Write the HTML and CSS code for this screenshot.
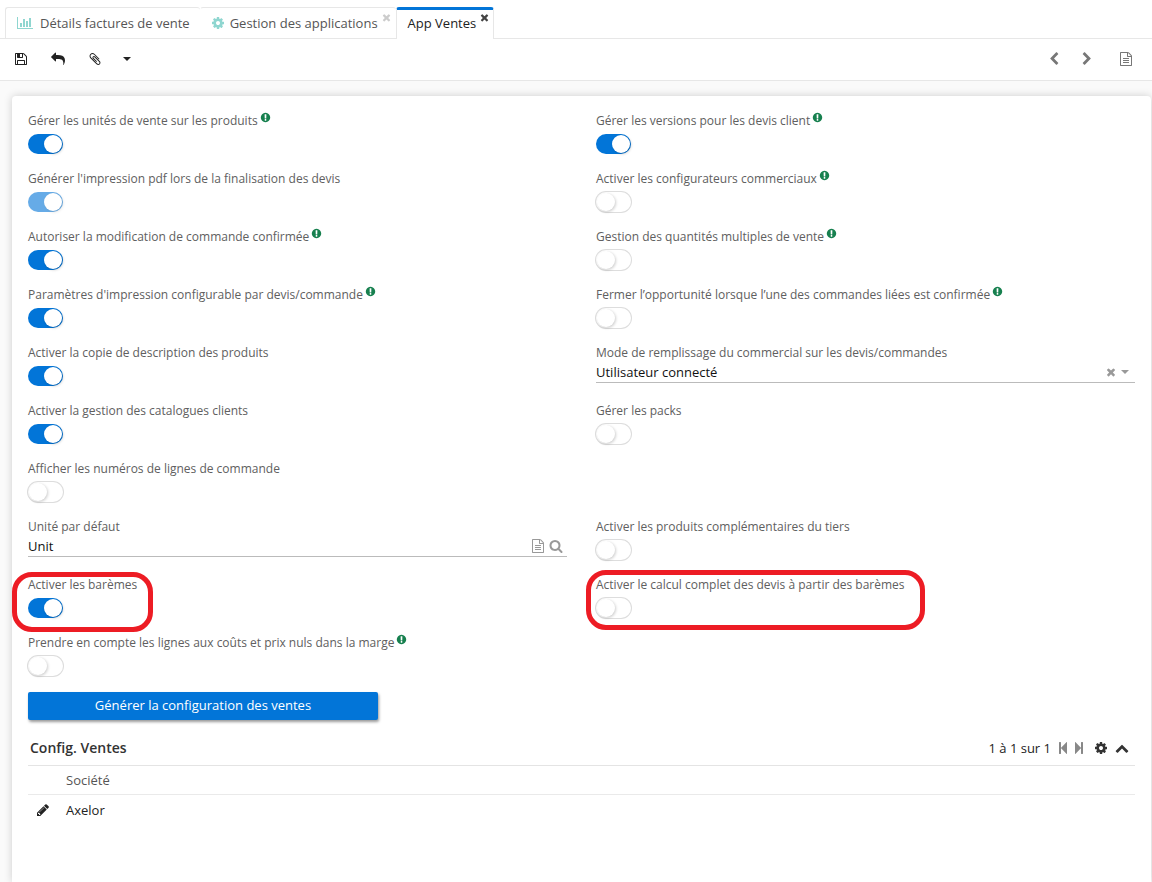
FILE: index.html
```html
<!DOCTYPE html>
<html lang="fr">
<head>
<meta charset="utf-8">
<title>App Ventes</title>
<link rel="stylesheet" href="styles.css">
</head>
<body>
<svg class="sprite" aria-hidden="true">
  <symbol id="times" viewBox="0 0 1792 1792"><path d="M1490 1322q0 40-28 68l-136 136q-28 28-68 28t-68-28l-294-294-294 294q-28 28-68 28t-68-28l-136-136q-28-28-28-68t28-68l294-294-294-294q-28-28-28-68t28-68l136-136q28-28 68-28t68 28l294 294 294-294q28-28 68-28t68 28l136 136q28 28 28 68t-28 68l-294 294 294 294q28 28 28 68z"/></symbol>
  <symbol id="cog" viewBox="0 0 1792 1792"><path d="M1152 896q0-106-75-181t-181-75-181 75-75 181 75 181 181 75 181-75 75-181zm512-109v222q0 12-8 23t-20 13l-185 28q-19 54-39 91 35 50 107 138 10 12 10 25t-9 23q-27 37-99 108t-94 71q-12 0-26-9l-138-108q-44 23-91 38-16 136-29 186-7 28-36 28h-222q-14 0-24.500-8.500t-11.500-21.500l-28-184q-49-16-90-37l-141 107q-10 9-25 9-14 0-25-11-126-114-165-168-7-10-7-23 0-12 8-23 15-21 51-66.500t54-70.500q-27-50-41-99l-183-27q-13-2-21-12.500t-8-23.500v-222q0-12 8-23t19-13l186-28q14-46 39-92-40-57-107-138-10-12-10-24 0-10 9-23 26-36 98.500-107.500t94.500-71.500q13 0 26 10l138 107q44-23 91-38 16-136 29-186 7-28 36-28h222q14 0 24.500 8.500t11.500 21.500l28 184q49 16 90 37l142-107q9-9 24-9 13 0 25 10 129 119 165 170 7 8 7 22 0 12-8 23-15 21-51 66.500t-54 70.500q26 50 41 98l183 28q13 2 21 12.500t8 23.500z"/></symbol>
  <symbol id="save" viewBox="0 0 1792 1792"><path d="M512 1536h768v-384h-768v384zm896 0h128v-896q0-14-10-38.500t-20-34.500l-281-281q-10-10-34-20t-39-10v416q0 40-28 68t-68 28h-576q-40 0-68-28t-28-68v-416h-128v1280h128v-416q0-40 28-68t68-28h832q40 0 68 28t28 68v416zm-384-928v-320q0-13-9.500-22.500t-22.500-9.500h-192q-13 0-22.500 9.500t-9.500 22.500v320q0 13 9.500 22.500t22.500 9.500h192q13 0 22.500-9.500t9.500-22.500zm640 32v928q0 40-28 68t-68 28h-1344q-40 0-68-28t-28-68v-1344q0-40 28-68t68-28h928q40 0 88 20t76 48l280 280q28 28 48 76t20 88z"/></symbol>
  <symbol id="reply" viewBox="0 0 1792 1792"><path d="M1792 1120q0 166-127 451-3 7-10.500 24t-13.500 30-13 22q-12 17-28 17-15 0-23.500-10t-8.500-25q0-9 2.500-26.500t2.500-23.500q5-68 5-123 0-101-17.500-181t-48.500-138.500-80-101-105.500-69.500-133-42.500-154-21.500-175.500-6h-224v256q0 26-19 45t-45 19-45-19l-512-512q-19-19-19-45t19-45l512-512q19-19 45-19t45 19 19 45v256h224q713 0 875 403 53 134 53 333z"/></symbol>
  <symbol id="clip" viewBox="0 0 1792 1792"><path d="M1596 1385q0 117-79 196t-196 79q-135 0-235-100l-777-776q-113-115-113-271 0-159 110-270t269-111q158 0 273 113l605 606q10 10 10 22 0 16-30.500 46.500t-46.500 30.500q-13 0-23-10l-606-607q-79-77-181-77-106 0-179 75t-73 181q0 105 76 181l776 777q63 63 145 63 64 0 106-42t42-106q0-82-63-145l-581-581q-26-24-60-24-29 0-48 19t-19 48q0 32 25 59l410 410q10 10 10 22 0 16-31 47t-47 31q-12 0-22-10l-410-410q-63-61-63-149 0-82 57-139t139-57q88 0 149 63l581 581q100 98 100 235z"/></symbol>
  <symbol id="chart" viewBox="0 0 2048 1792"><path d="M640 896v512h-256v-512h256zm384-512v1024h-256v-1024h256zm1024 1152v128h-2048v-1536h128v1408h1920zm-640-896v768h-256v-768h256zm384-384v1152h-256v-1152h256z"/></symbol>
  <symbol id="file" viewBox="0 0 1792 1792"><path d="M1596 380q28 28 48 76t20 88v1152q0 40-28 68t-68 28h-1344q-40 0-68-28t-28-68v-1600q0-40 28-68t68-28h896q40 0 88 20t76 48zm-444-244v376h376q-10-29-22-41l-313-313q-12-12-41-22zm384 1528v-1024h-416q-40 0-68-28t-28-68v-416h-768v1536h1280zm-1024-864q0-14 9-23t23-9h704q14 0 23 9t9 23v64q0 14-9 23t-23 9h-704q-14 0-23-9t-9-23v-64zm736 224q14 0 23 9t9 23v64q0 14-9 23t-23 9h-704q-14 0-23-9t-9-23v-64q0-14 9-23t23-9h704zm0 256q14 0 23 9t9 23v64q0 14-9 23t-23 9h-704q-14 0-23-9t-9-23v-64q0-14 9-23t23-9h704z"/></symbol>
  <symbol id="search" viewBox="0 0 1792 1792"><path d="M1216 832q0-185-131.500-316.500t-316.500-131.500-316.500 131.500-131.500 316.500 131.500 316.500 316.500 131.500 316.500-131.500 131.500-316.500zm512 832q0 52-38 90t-90 38q-54 0-90-38l-343-342q-179 124-399 124-143 0-273.500-55.500t-225-150-150-225-55.500-273.500 55.500-273.500 150-225 225-150 273.500-55.500 273.500 55.500 225 150 150 225 55.500 273.500q0 220-124 399l343 343q37 37 37 90z"/></symbol>
  <symbol id="info" viewBox="0 0 1792 1792"><path d="M896 128q209 0 385.500 103t279.500 279.500 103 385.500-103 385.500-279.500 279.500-385.500 103-385.500-103-279.500-279.500-103-385.500 103-385.500 279.500-279.500 385.500-103zm128 1247v-190q0-14-9-23.500t-22-9.500h-192q-13 0-23 10t-10 23v190q0 13 10 23t23 10h192q13 0 22-9.500t9-23.500zm-2-344l18-621q0-12-10-18-10-8-24-8h-220q-14 0-24 8-10 6-10 18l17 621q0 10 10 17.500t24 7.500h185q14 0 23.500-7.500t10.500-17.500z"/></symbol>
  <symbol id="pencil" viewBox="0 0 1792 1792"><path d="M491 1536l91-91-235-235-91 91v107h128v128h107zm523-928q0-22-22-22-10 0-17 7l-542 542q-7 7-7 17 0 22 22 22 10 0 17-7l542-542q7-7 7-17zm-54-192l416 416-832 832h-416v-416zm683 96q0 53-37 90l-166 166-416-416 166-165q36-38 90-38 53 0 91 38l235 234q37 39 37 91z"/></symbol>
  <symbol id="left" viewBox="0 0 1792 1792"><path d="M1427 301l-531 531 531 531q19 19 19 45t-19 45l-166 166q-19 19-45 19t-45-19l-742-742q-19-19-19-45t19-45l742-742q19-19 45-19t45 19l166 166q19 19 19 45t-19 45z"/></symbol>
  <symbol id="up" viewBox="0 0 1792 1792"><path d="M1683 1331l-166 165q-19 19-45 19t-45-19l-531-531-531 531q-19 19-45 19t-45-19l-166-165q-19-19-19-45.500t19-45.500l742-741q19-19 45-19t45 19l742 741q19 19 19 45.500t-19 45.500z"/></symbol>
  <symbol id="step" viewBox="0 0 1792 1792"><path d="M1363 141q19-19 32-13t13 32v1472q0 26-13 32t-32-13l-710-710q-9-9-13-19v678q0 26-19 45t-45 19h-128q-26 0-45-19t-19-45v-1408q0-26 19-45t45-19h128q26 0 45 19t19 45v678q4-11 13-19z"/></symbol>
  <symbol id="caret" viewBox="0 0 8 4"><path d="M0 0h8l-4 4z"/></symbol>
</svg>

<nav class="tabs">
  <a class="tab" href="#factures"><svg class="icon icon-chart"><use href="#chart"/></svg>Détails factures de vente</a>
  <div class="tab"><a class="tab-link" href="#apps"><svg class="icon icon-cog"><use href="#cog"/></svg>Gestion des applications</a><button class="close" aria-label="Fermer Gestion des applications"><svg class="icon icon-small"><use href="#times"/></svg></button></div>
  <div class="tab tab-active"><a class="tab-link" href="#ventes">App Ventes</a><button class="close" aria-label="Fermer App Ventes"><svg class="icon icon-small"><use href="#times"/></svg></button></div>
</nav>

<div class="toolbar">
  <button class="tool" aria-label="Enregistrer"><svg class="icon"><use href="#save"/></svg></button>
  <button class="tool" aria-label="Annuler"><svg class="icon icon-reply"><use href="#reply"/></svg></button>
  <button class="tool tool-clip" aria-label="Pièces jointes"><svg class="icon"><use href="#clip"/></svg></button>
  <button class="tool" aria-label="Plus"><svg class="caret"><use href="#caret"/></svg></button>
  <span class="spacer"></span>
  <button class="tool tool-grey" aria-label="Précédent"><svg class="icon"><use href="#left"/></svg></button>
  <button class="tool tool-grey" aria-label="Suivant"><svg class="icon flip"><use href="#left"/></svg></button>
  <button class="tool tool-grey tool-last" aria-label="Formulaire"><svg class="icon"><use href="#file"/></svg></button>
</div>

<main class="page">
  <div class="card">
    <form class="fields">
      <div class="field"><label for="f1">Gérer les unités de vente sur les produits<svg class="hint"><use href="#info"/></svg></label><input class="toggle" type="checkbox" id="f1" checked></div>
      <div class="field"><label for="f2">Gérer les versions pour les devis client<svg class="hint"><use href="#info"/></svg></label><input class="toggle" type="checkbox" id="f2" checked></div>
      <div class="field"><label for="f3">Générer l'impression pdf lors de la finalisation des devis</label><input class="toggle" type="checkbox" id="f3" checked disabled></div>
      <div class="field"><label for="f4">Activer les configurateurs commerciaux<svg class="hint"><use href="#info"/></svg></label><input class="toggle" type="checkbox" id="f4"></div>
      <div class="field"><label for="f5">Autoriser la modification de commande confirmée<svg class="hint"><use href="#info"/></svg></label><input class="toggle" type="checkbox" id="f5" checked></div>
      <div class="field"><label for="f6">Gestion des quantités multiples de vente<svg class="hint"><use href="#info"/></svg></label><input class="toggle" type="checkbox" id="f6"></div>
      <div class="field"><label for="f7">Paramètres d'impression configurable par devis/commande<svg class="hint"><use href="#info"/></svg></label><input class="toggle" type="checkbox" id="f7" checked></div>
      <div class="field"><label for="f8">Fermer l’opportunité lorsque l’une des commandes liées est confirmée<svg class="hint"><use href="#info"/></svg></label><input class="toggle" type="checkbox" id="f8"></div>
      <div class="field"><label for="f9">Activer la copie de description des produits</label><input class="toggle" type="checkbox" id="f9" checked></div>
      <div class="field"><label for="f10">Mode de remplissage du commercial sur les devis/commandes</label>
        <div class="entry"><select class="value" id="f10"><option>Utilisateur connecté</option></select><button type="button" class="entry-clear" aria-label="Effacer"><svg class="icon icon-clear"><use href="#times"/></svg></button><svg class="caret"><use href="#caret"/></svg></div></div>
      <div class="field"><label for="f11">Activer la gestion des catalogues clients</label><input class="toggle" type="checkbox" id="f11" checked></div>
      <div class="field"><label for="f12">Gérer les packs</label><input class="toggle" type="checkbox" id="f12"></div>
      <div class="field field-left"><label for="f13">Afficher les numéros de lignes de commande</label><input class="toggle" type="checkbox" id="f13"></div>
      <div class="field field-left"><label for="f14">Unité par défaut</label>
        <div class="entry"><input class="value" type="text" id="f14" value="Unit"><button type="button" class="entry-btn" aria-label="Ouvrir"><svg class="icon"><use href="#file"/></svg></button><button type="button" class="entry-btn" aria-label="Rechercher"><svg class="icon"><use href="#search"/></svg></button></div></div>
      <div class="field"><label for="f15">Activer les produits complémentaires du tiers</label><input class="toggle" type="checkbox" id="f15"></div>
      <div class="field"><label for="f16">Activer les barèmes</label><input class="toggle" type="checkbox" id="f16" checked><span class="mark mark-left"></span></div>
      <div class="field"><label for="f17">Activer le calcul complet des devis à partir des barèmes</label><input class="toggle" type="checkbox" id="f17"><span class="mark mark-right"></span></div>
      <div class="field field-left"><label for="f18">Prendre en compte les lignes aux coûts et prix nuls dans la marge<svg class="hint"><use href="#info"/></svg></label><input class="toggle" type="checkbox" id="f18"></div>
    </form>

    <button class="primary">Générer la configuration des ventes</button>

    <section class="panel">
      <header class="panel-head">
        <h2>Config. Ventes</h2>
        <span class="count">1 à 1 sur 1</span>
        <button class="pager" aria-label="Page précédente"><svg class="icon"><use href="#step"/></svg></button>
        <button class="pager" aria-label="Page suivante"><svg class="icon flip"><use href="#step"/></svg></button>
        <button class="panel-btn" aria-label="Options"><svg class="icon"><use href="#cog"/></svg></button>
        <button class="panel-btn" aria-label="Replier"><svg class="icon"><use href="#up"/></svg></button>
      </header>
      <table class="grid">
        <thead><tr><th class="edit"></th><th>Société</th></tr></thead>
        <tbody><tr><td class="edit"><button class="edit-btn" aria-label="Modifier"><svg class="icon"><use href="#pencil"/></svg></button></td><td>Axelor</td></tr></tbody>
      </table>
    </section>
  </div>
</main>
</body>
</html>
```
FILE: styles.css
```css
* { box-sizing: border-box; }

body {
  margin: 0;
  min-height: 100vh;
  display: flex;
  flex-direction: column;
  background: #fff;
  color: #222;
  font: 13px/18px "Open Sans", "Noto Sans", sans-serif;
}

button {
  display: flex;
  align-items: center;
  justify-content: center;
  padding: 0;
  border: 0;
  background: none;
  color: inherit;
  font: inherit;
  cursor: pointer;
}

svg { display: block; flex: none; fill: currentColor; }
.sprite { position: absolute; width: 0; height: 0; }
.icon { width: 14px; height: 14px; }
.caret { width: 8px; height: 4px; }
.flip { transform: scaleX(-1); }

.tabs {
  display: flex;
  height: 39px;
  padding: 7px 5px 0;
  border-bottom: 1px solid #e7e7e7;
}
.tab {
  display: flex;
  align-items: center;
  padding: 0 10px 0 11px;
  border: 1px solid #e7e7e7;
  border-width: 1px 0 0 1px;
  border-radius: 3px 3px 0 0;
  color: #555;
  text-decoration: none;
}
.tab + .tab { padding-right: 4px; padding-left: 10px; border-left-color: transparent; }
.tab-link { display: flex; align-items: center; color: inherit; text-decoration: none; }
.tab .icon-chart { width: 16px; margin-right: 7px; color: #8fd6d0; }
.icon-cog { margin-right: 5px; color: #8fd6d0; }
.tabs .tab-active {
  margin-bottom: -1px;
  padding: 0 3px 4px 11px;
  border-width: 3px 1px 0;
  border-color: #0275d8 #e7e7e7;
  background: #fff;
  color: #222;
}
.close { align-self: flex-start; padding-top: 4px; margin-left: 3px; color: #ccc; }
.tab-active .close { padding-top: 2px; color: #444; }
.icon-small { width: 11px; height: 11px; }

.toolbar {
  display: flex;
  align-items: center;
  height: 42px;
  padding: 0 18px 2px 13px;
  border-bottom: 1px solid #e7e7e7;
}
.tool { width: 16px; height: 24px; margin-right: 21px; color: #222; }
.tool-clip { margin-right: 16px; }
.tool-grey { margin-right: 17px; color: #777; }
.tool-last { margin: 0 0 0 6px; }
.spacer { flex: 1; }

.page {
  flex: 1;
  display: flex;
  padding: 15px 1px 0 12px;
  background: #fafafa;
  overflow: hidden;
}
.card {
  flex: 1;
  min-width: 0;
  padding: 16px;
  border-radius: 4px 4px 0 0;
  background: #fff;
  box-shadow: 0 0 8px rgba(0, 0, 0, .18);
}

.fields {
  display: grid;
  grid-template-columns: 1fr 1fr;
  grid-auto-rows: 58px;
  column-gap: 29px;
}
.field { position: relative; min-width: 0; }
.field-left { grid-column: 1; }
label { display: flex; color: #606060; font-size: 12px; white-space: nowrap; }
.hint { width: 11px; height: 11px; margin-left: 2px; color: #17804f; }

.toggle {
  appearance: none;
  display: block;
  width: 35px;
  height: 20px;
  margin: 4px 0 0;
  border-radius: 10px;
  background: #fff;
  box-shadow: 0 0 0 1px #ddd;
}
.toggle::before {
  content: "";
  display: block;
  width: 18px;
  height: 18px;
  margin: 1px;
  border-radius: 50%;
  background: #fff;
  box-shadow: 1px 1px 3px rgba(0, 0, 0, .2);
}
.toggle:checked { padding-left: 15px; background: #0275d8; box-shadow: none; }
.toggle:disabled { opacity: .6; }

.entry {
  display: flex;
  align-items: center;
  height: 21px;
  border-bottom: 1px solid #bbb;
  color: #999;
}
.entry .caret { margin: 0 6px 0 4px; }
.entry-btn { margin-right: 4px; }
.icon-clear { width: 12px; height: 12px; }
.value {
  appearance: none;
  flex: 1;
  min-width: 0;
  height: 20px;
  padding: 0;
  border: 0;
  background: none;
  color: #111;
  font: inherit;
}

.mark {
  position: absolute;
  height: 60px;
  border: 5px solid #ed1c24;
  border-radius: 20px;
  pointer-events: none;
}
.mark-left { left: -16px; top: -4px; width: 141px; }
.mark-right { left: -10px; top: -6px; width: 339px; }

.primary {
  width: 350px;
  max-width: 100%;
  height: 28px;
  padding-bottom: 2px;
  border-radius: 2px;
  background: #0275d8;
  color: #fff;
  box-shadow: 1px 2px 3px rgba(0, 0, 0, .4);
}

.panel { margin-top: 10px; }
.panel-head {
  display: flex;
  align-items: center;
  height: 36px;
  padding: 0 6px 0 2px;
  border-bottom: 1px solid #e4e4e4;
}
h2 { flex: 1; margin: 0; font-size: 14px; font-weight: 600; color: #333; }
.count { margin-right: 4px; }
.pager { width: 16px; color: #888; }
.panel-btn { margin-left: 7px; color: #333; }
.grid { width: 100%; border-spacing: 0; }
.grid th, .grid td { height: 29px; padding: 0; text-align: left; font-weight: 400; }
.grid th { border-bottom: 1px solid #eaeaea; color: #555; }
.grid .edit { width: 38px; padding-left: 8px; }
```
